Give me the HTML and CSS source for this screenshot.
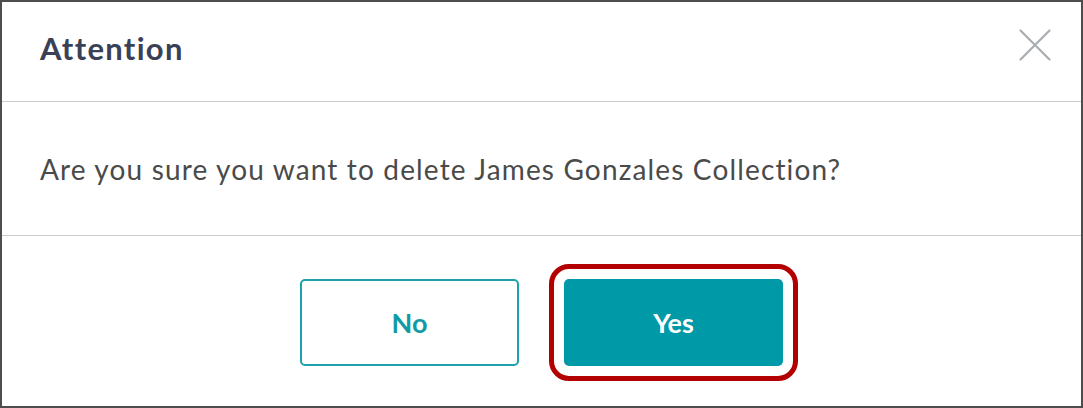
FILE: index.html
```html
<!DOCTYPE html>
<html lang="en">
<head>
<meta charset="utf-8">
<title>Attention</title>
<link rel="stylesheet" href="styles.css">
</head>
<body>
<div class="dialog">
  <div class="dialog-header">
    <h2 class="dialog-title">Attention</h2>
    <button class="close-btn" aria-label="Close">
      <svg width="32" height="32" viewBox="0 0 32 32" aria-hidden="true">
        <path d="M1.5 1.5 L30.5 30.5 M30.5 1.5 L1.5 30.5" stroke="#a9adb2" stroke-width="2.2" stroke-linecap="round" fill="none"/>
      </svg>
    </button>
  </div>
  <div class="dialog-body">
    <p class="message">Are you sure you want to delete James Gonzales Collection?</p>
  </div>
  <div class="dialog-footer">
    <button class="btn btn-outline">No</button>
    <button class="btn btn-primary highlighted">Yes</button>
  </div>
</div>
</body>
</html>
```

FILE: styles.css
```css
* { box-sizing: border-box; }
html, body { margin: 0; padding: 0; background: #ffffff; }
body { font-family: "Lato", "Open Sans", sans-serif; }

.dialog {
  width: 1083px;
  height: 408px;
  border: 2px solid #4d4d4d;
  background: #ffffff;
  display: flex;
  flex-direction: column;
}

.dialog-header {
  height: 100px;
  border-bottom: 1px solid #c9cdd2;
  display: flex;
  align-items: center;
  justify-content: space-between;
  padding: 0 30px 0 38px;
}

.dialog-title {
  margin: 0 0 8px 0;
  font-size: 31px;
  font-weight: 700;
  color: #3a4156;
  letter-spacing: 1.3px;
}

.close-btn {
  border: 0;
  background: transparent;
  padding: 0;
  width: 32px;
  height: 32px;
  display: flex;
  margin-top: -14px;
}

.dialog-body {
  height: 134px;
  border-bottom: 1px solid #c9cdd2;
  display: flex;
  align-items: center;
  padding: 0 38px;
}

.message {
  margin: 0;
  font-size: 28px;
  color: #4a4a4a;
  letter-spacing: 1.15px;
}

.dialog-footer {
  flex: 1;
  display: flex;
  justify-content: center;
  align-items: center;
  gap: 45px;
  padding-top: 2px;
}

.btn {
  width: 219px;
  height: 87px;
  border-radius: 5px;
  font-family: "Lato", "Open Sans", sans-serif;
  font-size: 27px;
  font-weight: 700;
  cursor: pointer;
}

.btn-outline {
  background: #ffffff;
  border: 2px solid #1ca2ad;
  color: #0f9aa6;
}

.btn-primary {
  background: #0099a7;
  border: 0;
  color: #ffffff;
}

.highlighted {
  outline: 5px solid #b30000;
  outline-offset: 10px;
}
```
